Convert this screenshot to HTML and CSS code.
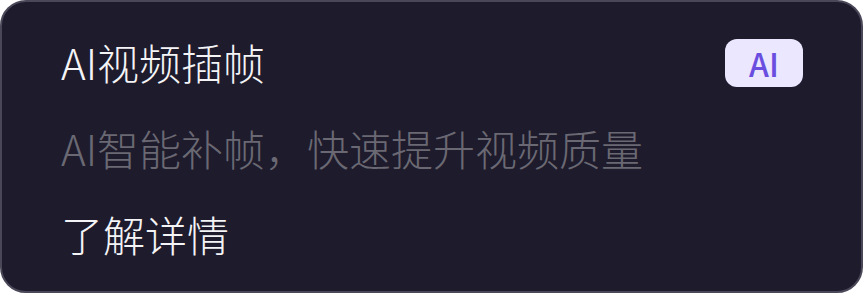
FILE: index.html
```html
<!DOCTYPE html>
<html lang="zh-CN">
  <head>
    <meta charset="UTF-8" />
    <meta name="viewport" content="width=device-width, initial-scale=1.0" />
    <link rel="stylesheet" href="styles.css">
  </head>
  <body>
    <div class="card">
      <div class="card-row">
        <span class="card-title">AI视频插帧</span>
        <span class="badge">AI</span>
      </div>
      <div class="card-row">
        <span class="card-desc">AI智能补帧，快速提升视频质量</span>
      </div>
      <div class="card-row">
        <a class="card-link" href="#">了解详情</a>
      </div>
    </div>
  </body>
</html>
```

FILE: styles.css
```css
/* 页面 */
body {
  margin: 0;
  background-color: #fff;
  font-family: "Noto Sans CJK SC", "Noto Sans", sans-serif;
}

/* 卡片 */
.card {
  box-sizing: border-box;
  width: 863px;
  height: 293px;
  padding: 17px 58px 14px 59px;
  background-color: #1e1b2c;
  border: 2px solid #4a4858;
  border-radius: 26px;
  display: flex;
  flex-direction: column;
}

.card-row {
  height: 86px;
  display: flex;
  align-items: center;
  justify-content: space-between;
}

.card-title,
.card-desc,
.card-link {
  font-size: 42px;
  font-weight: 300;
  line-height: 1;
}

.card-title {
  color: #f4f4f6;
}

.card-desc {
  color: #6a6973;
}

.card-link {
  color: #f4f4f6;
  text-decoration: none;
}

/* AI 标签 */
.badge {
  width: 78px;
  height: 48px;
  margin-top: 2px;
  border-radius: 12px;
  background-color: #ebe7ff;
  color: #6a4ee0;
  font-size: 32px;
  font-weight: 500;
  display: flex;
  align-items: center;
  justify-content: center;
}
```
